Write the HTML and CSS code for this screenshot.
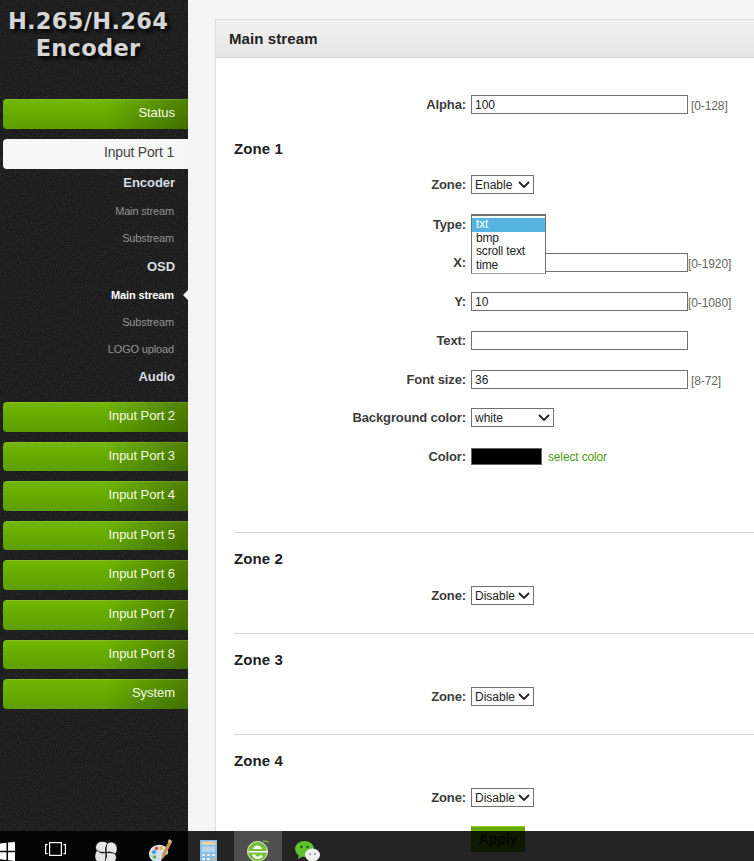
FILE: index.html
```html
<!DOCTYPE html>
<html lang="en">
<head>
<meta charset="utf-8">
<title>H.265/H.264 Encoder</title>
<link rel="stylesheet" href="styles.css">
</head>
<body>
<div class="app">
  <aside class="sidebar">
    <div class="logo">H.265/H.264<br>Encoder</div>
    <nav class="nav">
      <a class="btn">Status</a>
      <a class="btn active">Input Port 1</a>
      <a class="sec sec-first">Encoder</a>
      <a class="sub sub-a">Main stream</a>
      <a class="sub">Substream</a>
      <a class="sec">OSD</a>
      <a class="sub current">Main stream</a>
      <a class="sub">Substream</a>
      <a class="sub">LOGO upload</a>
      <a class="sec sec-last">Audio</a>
      <a class="btn">Input Port 2</a>
      <a class="btn">Input Port 3</a>
      <a class="btn">Input Port 4</a>
      <a class="btn">Input Port 5</a>
      <a class="btn">Input Port 6</a>
      <a class="btn">Input Port 7</a>
      <a class="btn">Input Port 8</a>
      <a class="btn">System</a>
    </nav>
  </aside>
  <main class="main">
    <section class="panel">
      <h2 class="panel-title">Main stream</h2>
      <div class="panel-body">
        <div class="row row-alpha"><label class="lbl">Alpha:</label><input class="txt" value="100"><span class="hint">[0-128]</span></div>
        <h3 class="zone">Zone 1</h3>
        <div class="row row-zone"><label class="lbl">Zone:</label><select class="sel sel-s"><option>Enable</option></select></div>
        <div class="row">
          <label class="lbl lbl-type">Type:</label>
          <div class="type-wrap">
            <select class="sel sel-t"><option>txt</option></select>
            <ul class="dropdown">
              <li class="on">txt</li><li>bmp</li><li>scroll text</li><li>time</li>
            </ul>
          </div>
        </div>
        <div class="row"><label class="lbl">X:</label><input class="txt"><span class="hint hint-tight">[0-1920]</span></div>
        <div class="row"><label class="lbl">Y:</label><input class="txt" value="10"><span class="hint hint-tight">[0-1080]</span></div>
        <div class="row"><label class="lbl">Text:</label><input class="txt"></div>
        <div class="row row-font"><label class="lbl">Font size:</label><input class="txt" value="36"><span class="hint">[8-72]</span></div>
        <div class="row"><label class="lbl">Background color:</label><select class="sel sel-m"><option>white</option></select></div>
        <div class="row"><label class="lbl">Color:</label><span class="swatch"></span><a class="pick">select color</a></div>
        <hr class="rule rule-1">
        <h3 class="zone zone-n">Zone 2</h3>
        <div class="row row-dis"><label class="lbl">Zone:</label><select class="sel sel-s"><option>Disable</option></select></div>
        <hr class="rule">
        <h3 class="zone zone-n">Zone 3</h3>
        <div class="row row-dis"><label class="lbl">Zone:</label><select class="sel sel-s"><option>Disable</option></select></div>
        <hr class="rule">
        <h3 class="zone zone-n">Zone 4</h3>
        <div class="row row-last"><label class="lbl">Zone:</label><select class="sel sel-s"><option>Disable</option></select></div>
        <div class="apply-row"><button class="apply">Apply</button></div>
      </div>
    </section>
  </main>
</div>
<div class="taskbar">
  <svg class="tb tb-win" width="15" height="19" viewBox="0 0 15 19"><path fill="#fff" d="M0 1.500 6.500.8v8H0zM8 .6 15 0v8.800H8zM0 10.200h6.500v7.800L0 17.200zM8 10.200h7V19l-7-.8z"/></svg>
  <svg class="tb tb-view" width="21" height="14" viewBox="0 0 21 14"><g fill="none" stroke="#fff" stroke-width="1.2"><rect x="4.6" y=".6" width="11.8" height="12.8"/><path d="M2.6 2.6H.6v9h2M18.4 2.6h2v9h-2"/></g></svg>
  <svg class="tb tb-fan" width="22" height="23" viewBox="0 0 22 23"><g fill="#e6e6e6" stroke="#0a0a0a" stroke-width=".8"><path d="M11 11.500C7 11 1 12.500.6 7 .4 2.500 4 .3 7 .3c3 0 5.500 1.200 6.200 2.700C10.500 5 10 8 11 11.500z"/><path d="M11 11.500C7 11 1 12.500.6 7 .4 2.500 4 .3 7 .3c3 0 5.500 1.200 6.200 2.700C10.500 5 10 8 11 11.500z" transform="rotate(90 11 11.500)"/><path d="M11 11.500C7 11 1 12.500.6 7 .4 2.500 4 .3 7 .3c3 0 5.500 1.200 6.200 2.700C10.500 5 10 8 11 11.500z" transform="rotate(180 11 11.500)"/><path d="M11 11.500C7 11 1 12.500.6 7 .4 2.500 4 .3 7 .3c3 0 5.500 1.200 6.200 2.700C10.500 5 10 8 11 11.500z" transform="rotate(270 11 11.500)"/></g></svg>
  <svg class="tb tb-palette" width="25" height="25" viewBox="0 0 25 25"><path fill="#cfe0ea" d="M1 15C1 9 7 5 13 6c5 .8 8 4 7 8-.7 2.500-3.500 2-5 2.500-1.500.6-.5 3-2 5.500-3 3-12 .5-12-7z"/><circle cx="6" cy="13" r="2" fill="#3f9ad6"/><circle cx="8.500" cy="9.500" r="1.800" fill="#d84a3a"/><circle cx="13" cy="9" r="1.800" fill="#e8b52e"/><circle cx="6.500" cy="18" r="1.800" fill="#5cae3c"/><path fill="#c9954a" d="M21 1.500 24 3l-7 14-3.500 4 .5-5.500z"/><path fill="#e9c486" d="M21 0l3 2-1 2-3-1.500z"/></svg>
  <svg class="tb tb-calc" width="17" height="22" viewBox="0 0 17 22"><rect width="17" height="22" fill="#86bce6"/><rect x="1.500" y="1.500" width="14" height="3.500" fill="#e6cfa4"/><rect x="2" y="6.500" width="13" height="5.500" fill="#b5d6ef"/><path fill="#e7eef5" d="M2 14h3v2H2zM7 14h3v2H7zM12 14h3v2h-3zM2 18h3v2H2zM7 18h3v2H7z"/><path fill="#e9b45c" d="M12 18h3v2h-3z"/></svg>
  <div class="tb-active">
    <svg width="24" height="24" viewBox="0 0 24 24"><circle cx="11.500" cy="12.500" r="10" fill="#74c03c" stroke="#dff3cc" stroke-width="1"/><path fill="#fff" d="M2.500 12h19v1.600h-19zM11.500 6.500c2.400 0 4 1.500 4.400 3.500H7.100c.4-2 2-3.500 4.400-3.500z"/><path fill="#fff" d="M6 15.500h3c.8 1.500 1.500 2 2.700 2 1.300 0 2-.5 2.800-1.500l2.500 1c-1.300 2-3 3-5.300 3-2.800 0-4.800-1.800-5.700-4.500z"/><path fill="none" stroke="#9bdc5f" stroke-width="1.200" d="M17 2c2 0 5 0 5.500 1.500"/></svg>
  </div>
  <svg class="tb tb-chat" width="25" height="22" viewBox="0 0 25 22"><ellipse cx="9.500" cy="8" rx="9.500" ry="8" fill="#62c32f"/><path fill="#62c32f" d="M4 13l-1 5 5-3z"/><circle cx="6.500" cy="6" r="1.300" fill="#1b5a12"/><circle cx="12.500" cy="6" r="1.300" fill="#1b5a12"/><ellipse cx="17.500" cy="14" rx="7.500" ry="6.500" fill="#f1f1f1"/><path fill="#f1f1f1" d="M20 19l2 3-5-2z"/><circle cx="15" cy="13" r="1" fill="#888"/><circle cx="20" cy="13" r="1" fill="#888"/></svg>
</div>
</body>
</html>
```
FILE: styles.css
```css
* { box-sizing: border-box; }
html, body { margin: 0; height: 100%; overflow: hidden; }
body { font-family: "Liberation Sans", Arial, sans-serif; font-size: 12px; color: #333; background: #f5f5f5; position: relative; }
.app { display: flex; height: 861px; overflow: hidden; }

.sidebar {
  flex: 0 0 188px;
  background-color: #191919;
  background-image: url("data:image/svg+xml,%3Csvg xmlns='http://www.w3.org/2000/svg' width='240' height='240'%3E%3Cfilter id='n'%3E%3CfeTurbulence type='fractalNoise' baseFrequency='.85' numOctaves='2' seed='4'/%3E%3CfeColorMatrix values='0 0 0 0 1 0 0 0 0 1 0 0 0 0 1 0 0 0 .16 -.05'/%3E%3C/filter%3E%3Crect width='240' height='240' filter='url(%23n)'/%3E%3C/svg%3E");
}
.logo {
  height: 99px;
  padding: 8px 12px 0 0;
  text-align: center;
  font-family: "DejaVu Sans", sans-serif;
  font-weight: 700;
  font-size: 22.500px;
  line-height: 27px;
  letter-spacing: .3px;
  color: #d6d6d6;
  text-shadow: 1px 1px 0 #111, 3px 3px 4px #000;
}
.nav { display: flex; flex-direction: column; }
.btn {
  display: block;
  height: 29.600px;
  line-height: 28px;
  margin: 0 0 10px 3px;
  padding-right: 13px;
  text-align: right;
  font-size: 13px;
  letter-spacing: -.05px;
  color: #f2fbe6;
  border-radius: 4px 0 0 4px;
  background:
    linear-gradient(to right, transparent 55%, rgba(0,0,0,.3) 100%),
    linear-gradient(#72b700, #5c9f00);
  box-shadow: inset 0 1px 0 rgba(255,255,255,.14);
}
.btn.active {
  color: #444;
  background: #f6f6f6;
  box-shadow: none;
  margin-bottom: 0;
  height: 30px;
  line-height: 27px;
  font-size: 14px;
  letter-spacing: -.2px;
  padding-right: 14px;
}
.sec {
  display: block;
  text-align: right;
  padding-right: 13px;
  font-size: 13px;
  font-weight: 700;
  letter-spacing: -.05px;
  color: #d8dde2;
  line-height: 20px;
  margin-top: 12px;
}
.sec-first { margin-top: 4px; }
.sec-last { margin-top: 11px; margin-bottom: 15.500px; }
.sub {
  display: block;
  position: relative;
  text-align: right;
  padding-right: 14px;
  font-size: 11px;
  letter-spacing: -.15px;
  color: #949494;
  line-height: 14px;
  margin-top: 13px;
}
.sub-a { margin-top: 11px; }
.sec + .sub.current { margin-top: 11px; }
.current { color: #fff; font-weight: 700; letter-spacing: -.1px; }
.current::after {
  content: "";
  position: absolute;
  right: 0;
  top: 2px;
  border: 5px solid transparent;
  border-right-color: #f5f5f5;
  border-left-width: 0;
}

.main { flex: 1; min-width: 0; padding: 19px 0 0 27px; }
.panel {
  width: 560px;
  height: 900px;
  background: #fff;
  border: 1px solid #dedede;
  border-right: 0;
}
.panel-title {
  margin: 0;
  height: 38px;
  padding-left: 13px;
  line-height: 38px;
  font-size: 15px;
  font-weight: 700;
  color: #222;
  border-bottom: 1px solid #d8d8d8;
  background: linear-gradient(#f1f1f1, #e5e5e5);
  letter-spacing: .1px;
}
.panel-body { padding: 0 0 0 18px; }
.row {
  display: flex;
  align-items: center;
  height: 19px;
  margin-bottom: 20px;
}
.row-alpha { margin-top: 37px; margin-bottom: 0; }
.row-font { margin-bottom: 19px; }
.lbl {
  flex: 0 0 232px;
  margin-right: 5px;
  text-align: right;
  font-size: 13px;
  letter-spacing: -.12px;
  font-weight: 700;
  color: #3c3c3c;
}
.lbl-type { padding-top: 2px; }
.txt {
  width: 217px;
  height: 19px;
  border: 1px solid #707070;
  padding: 0 3px;
  font: 12px "Liberation Sans", Arial, sans-serif;
  color: #222;
  background: #fff;
  outline: 0;
}
.hint { margin-left: 3px; padding-top: 3px; font-size: 12px; letter-spacing: -.1px; color: #666; }
.hint-tight { margin-left: 0; }
.sel {
  appearance: none;
  -webkit-appearance: none;
  height: 19px;
  border: 1px solid #707070;
  border-radius: 0;
  padding: 0 0 0 3px;
  font: 12px "Liberation Sans", Arial, sans-serif;
  color: #222;
  background-color: #fff;
  background-image: url("data:image/svg+xml,%3Csvg xmlns='http://www.w3.org/2000/svg' width='12' height='7'%3E%3Cpath d='M1 1l5 5 5-5' fill='none' stroke='%23222' stroke-width='1.800'/%3E%3C/svg%3E");
  background-repeat: no-repeat;
  background-position: right 3px center;
}
.sel-s { width: 63px; }
.sel-m { width: 83px; }
.sel-t { width: 75px; }
.type-wrap { position: relative; height: 19px; }
.dropdown {
  position: absolute;
  left: 0;
  top: 1px;
  z-index: 2;
  width: 75px;
  margin: 0;
  padding: 2px 0 1px;
  list-style: none;
  background: #fff;
  border: 1px solid #707070;
  border-bottom-color: #a0a0a0;
  font-size: 12px;
  letter-spacing: -.15px;
  line-height: 13.500px;
  color: #222;
}
.dropdown li { padding-left: 4px; }
.dropdown .on { background: #56b4e2; color: #fff; }
.swatch { display: block; width: 71px; height: 17px; background: #000; border: 1px solid #666; }
.pick { margin-left: 6px; font-size: 12px; letter-spacing: -.15px; color: #4f9a12; }
.zone { margin: 0; font-size: 15px; font-weight: 700; color: #222; line-height: 18px; letter-spacing: .1px; }
.row-alpha + .zone { margin-top: 26px; margin-bottom: 17px; }
.rule { margin: 0; border: 0; border-top: 1px solid #d4d4d4; width: 520px; }
.rule-1 { margin-top: 66px; }
.zone-n { margin: 17px 0 18px; }
.row-dis { margin-bottom: 28px; }
.row-last { margin-bottom: 19px; }
.apply-row { padding-left: 237px; }
.apply {
  display: block;
  width: 54px;
  height: 26px;
  border: 0;
  padding: 0;
  font: 700 14px "Liberation Sans", Arial, sans-serif;
  color: #333;
  background: #66ad00;
  box-shadow: inset 0 1px 0 #8cc820;
}

.taskbar {
  position: absolute;
  left: 0;
  right: 0;
  bottom: 0;
  height: 30px;
  z-index: 5;
  overflow: hidden;
  background: rgba(0,0,0,.86);
}
.tb { position: absolute; }
.tb-win { left: 0; top: 11px; }
.tb-view { left: 45px; top: 11px; }
.tb-fan { left: 95px; top: 10px; }
.tb-palette { left: 148px; top: 8px; }
.tb-calc { left: 200px; top: 9px; }
.tb-active { position: absolute; left: 234px; top: 0; width: 48px; height: 30px; background: rgba(255,255,255,.2); display: flex; justify-content: center; padding-top: 8px; }
.tb-chat { left: 295px; top: 10px; }
```
